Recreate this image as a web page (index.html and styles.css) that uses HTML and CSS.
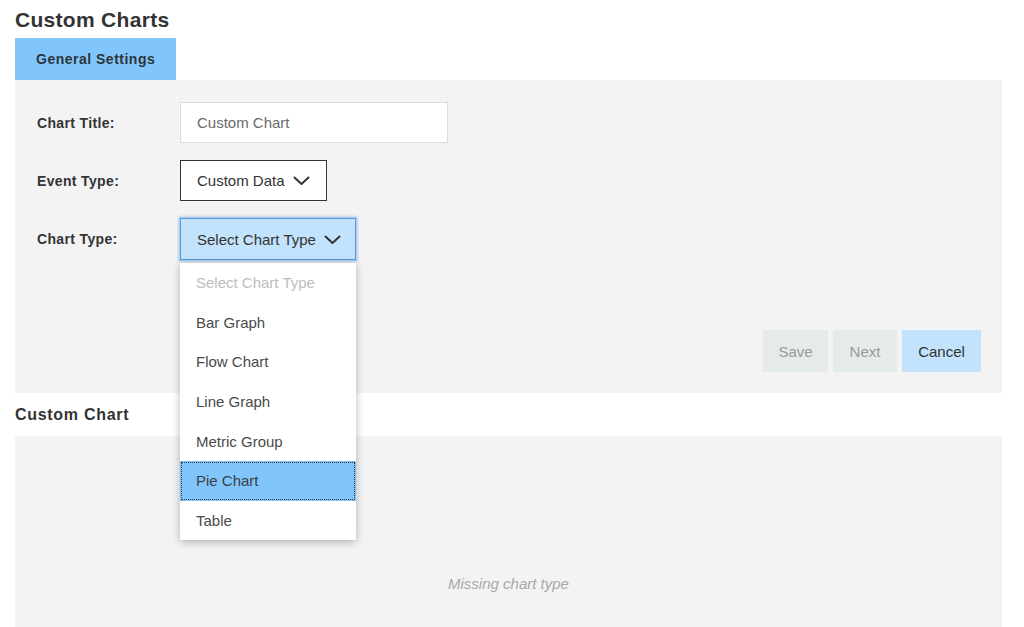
FILE: index.html
```html
<!DOCTYPE html>
<html>
<head>
<meta charset="utf-8">
<link rel="stylesheet" href="styles.css">
</head>
<body>
<div class="page">
  <h1 class="page-title">Custom Charts</h1>
  <div class="tabs"><div class="tab active">General Settings</div></div>
  <section class="settings">
    <div class="row">
      <label class="label">Chart Title:</label>
      <div class="input">Custom Chart</div>
    </div>
    <div class="row">
      <label class="label">Event Type:</label>
      <div class="select">
        <span>Custom Data</span>
        <svg class="chev" width="17" height="10" viewBox="0 0 17 10"><path d="M1.5 1.5 L8.5 8 L15.5 1.5" fill="none" stroke="#333" stroke-width="2" stroke-linecap="round" stroke-linejoin="round"/></svg>
      </div>
    </div>
    <div class="row row-tall">
      <label class="label">Chart Type:</label>
      <div class="select-wrap">
        <div class="select focused">
          <span>Select Chart Type</span>
          <svg class="chev" width="17" height="10" viewBox="0 0 17 10"><path d="M1.5 1.5 L8.5 8 L15.5 1.5" fill="none" stroke="#333" stroke-width="2" stroke-linecap="round" stroke-linejoin="round"/></svg>
        </div>
        <ul class="menu">
          <li class="opt placeholder">Select Chart Type</li>
          <li class="opt">Bar Graph</li>
          <li class="opt">Flow Chart</li>
          <li class="opt">Line Graph</li>
          <li class="opt">Metric Group</li>
          <li class="opt selected">Pie Chart</li>
          <li class="opt">Table</li>
        </ul>
      </div>
    </div>
    <div class="actions">
      <button class="btn disabled btn-save">Save</button>
      <button class="btn disabled btn-next">Next</button>
      <button class="btn primary btn-cancel">Cancel</button>
    </div>
  </section>
  <h2 class="section-title">Custom Chart</h2>
  <section class="chart">
    <span class="empty">Missing chart type</span>
  </section>
</div>
</body>
</html>
```
FILE: styles.css
```css
* { box-sizing: border-box; }
html, body { margin: 0; padding: 0; background: #fff; overflow: hidden; }
body { font-family: "Liberation Sans", Arial, sans-serif; color: #333; }
.page { width: 1002px; padding-left: 15px; }
.page-title { margin: 5px 0 3px; font-size: 21px; line-height: 30px; font-weight: bold; letter-spacing: 0.3px; color: #333; }
.tabs { display: flex; }
.tab { height: 42px; line-height: 42px; padding: 0 21px; font-size: 14px; font-weight: bold; letter-spacing: 0.5px; color: #2e3338; background: #80c6fc; }
.settings { background: #f3f3f3; padding: 22px 21px 21px 22px; display: flex; flex-direction: column; gap: 17px; }
.row { display: flex; align-items: center; height: 41px; }
.row-tall { height: 42px; }
.label { width: 143px; font-size: 14px; font-weight: bold; letter-spacing: 0.35px; color: #333; }
.input { width: 268px; height: 41px; border: 1px solid #dcdcdc; background: #fff; padding-left: 16px; display: flex; align-items: center; font-size: 15px; color: #6b6b6b; }
.select-wrap { position: relative; }
.select { height: 41px; border: 1px solid #333; background: #fff; display: inline-flex; align-items: center; padding: 0 16px 0 16px; font-size: 15px; color: #333; gap: 8px; white-space: nowrap; }
.select .chev { display: block; margin-top: 1px; flex: none; }
.select.focused { height: 42px; width: 176px; justify-content: space-between; padding: 0 17px 0 16px; background: #c2e3fb; border: 1px solid #5a9ad8; box-shadow: 0 0 0 1px #a9d0f2, 0 0 3px 1px rgba(90,154,216,0.6); }
.menu { position: absolute; top: 45px; left: 0; width: 176px; margin: 0; padding: 0; list-style: none; background: #fff; box-shadow: 0 2px 8px rgba(0,0,0,0.28); z-index: 5; }
.opt { height: 39.6px; display: flex; align-items: center; padding-left: 16px; font-size: 15px; color: #4a4a4a; }
.opt.placeholder { color: #bdbdbd; }
.opt.selected { background: #80c6fc; outline: 1px dotted #333; outline-offset: -2px; color: #3a3f44; }
.actions { display: flex; justify-content: flex-end; gap: 5px; margin-top: 53px; }
.btn { height: 42px; border: 0; padding: 0; text-align: center; font-family: "Liberation Sans", Arial, sans-serif; font-size: 15px; background: #e5ebea; color: #9a9a9a; }
.btn-save { width: 65px; }
.btn-next { width: 64px; }
.btn-cancel { width: 79px; }
.btn.primary { background: #c2e3fb; color: #333; }
.section-title { margin: 0; height: 43px; line-height: 43px; font-size: 16px; font-weight: bold; letter-spacing: 0.7px; color: #333; }
.chart { height: 294px; background: #f3f3f3; display: flex; align-items: center; justify-content: center; }
.empty { font-style: italic; font-size: 15px; color: #a8a8a8; }
```
